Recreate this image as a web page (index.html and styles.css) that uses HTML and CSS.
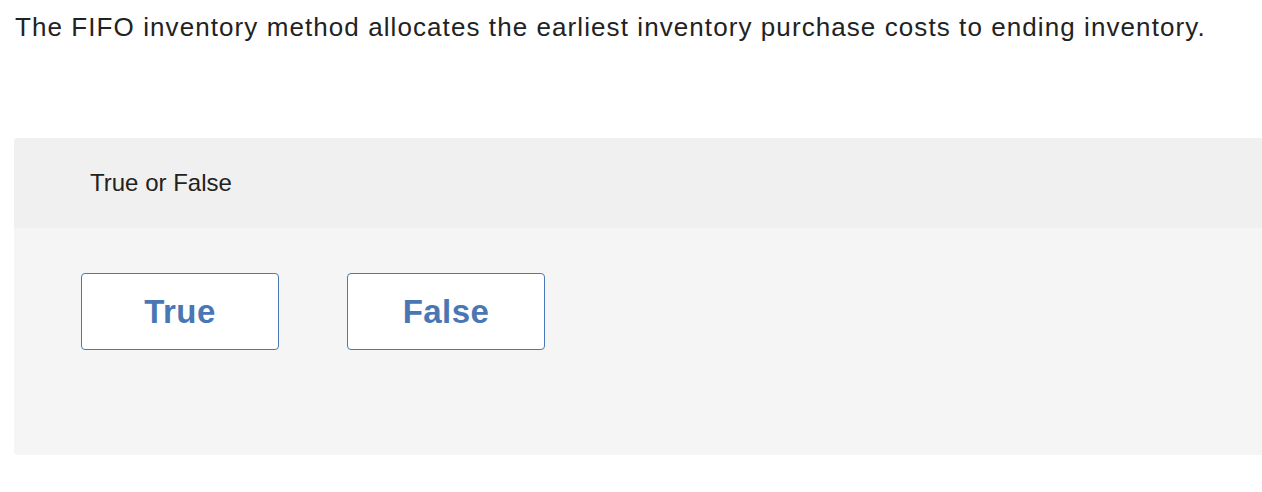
FILE: index.html
```html
<!DOCTYPE html>
<html>
<head>
<meta charset="utf-8">
<link rel="stylesheet" href="styles.css">
</head>
<body>
<p class="question">The FIFO inventory method allocates the earliest inventory purchase costs to ending inventory.</p>
<div class="panel">
  <div class="panel-head">True or False</div>
  <div class="panel-body">
    <button class="choice">True</button>
    <button class="choice">False</button>
  </div>
</div>
</body>
</html>
```

FILE: styles.css
```css
html, body {
  margin: 0;
  padding: 0;
  background: #ffffff;
}
body {
  font-family: "Liberation Sans", Arial, sans-serif;
  color: #222222;
  width: 1262px;
  overflow: hidden;
}
.question {
  margin: 12px 0 0 15px;
  font-size: 26px;
  line-height: 31px;
  letter-spacing: 1.08px;
  white-space: nowrap;
}
.panel {
  margin: 95px 0 0 14px;
  border-radius: 4px 0 0 4px;
  overflow: hidden;
  background: #f5f5f5;
}
.panel-head {
  height: 90px;
  background: #f0f0f0;
  display: flex;
  align-items: center;
  padding-left: 76px;
  font-size: 24px;
  color: #222222;
}
.panel-body {
  display: flex;
  gap: 68px;
  padding: 45px 0 105px 67px;
}
.choice {
  width: 198px;
  height: 77px;
  box-sizing: border-box;
  background: #ffffff;
  border: 1px solid #4a78b6;
  border-radius: 4px;
  font-family: "Liberation Sans", Arial, sans-serif;
  font-weight: bold;
  font-size: 33px;
  letter-spacing: 0.4px;
  color: #4a76b4;
  padding: 0;
  cursor: pointer;
}
```
